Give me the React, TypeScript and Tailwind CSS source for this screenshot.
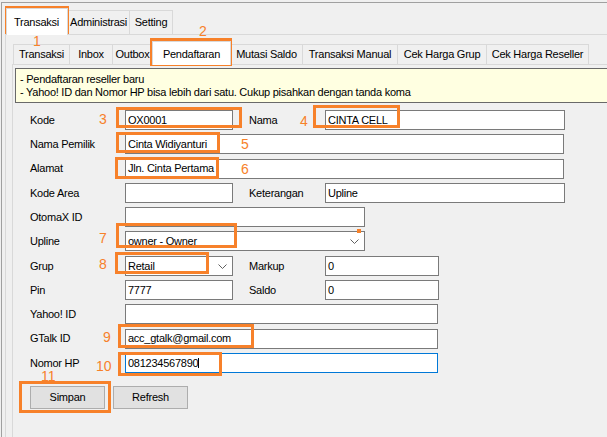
import React from "react";

type BoxProps = {
  w: string;
  value?: string;
  focused?: boolean;
  caret?: boolean;
};

function Box({ w, value = "", focused = false, caret = false }: BoxProps) {
  return (
    <div
      className={`${w} h-[20px] bg-white border ${focused ? "border-[#0078d7]" : "border-[#7a7a7a]"} pl-[2px] flex items-center text-black`}
    >
      <span>{value}</span>
      {caret ? <span className="w-[1px] h-[10px] bg-black" /> : null}
    </div>
  );
}

function Combo({ w, value }: { w: string; value: string }) {
  return (
    <div className={`${w} h-[20px] bg-white border border-[#7a7a7a] pl-[2px] pr-[5px] flex items-center justify-between text-black`}>
      <span>{value}</span>
      <svg width="9" height="5" viewBox="0 0 9 5" className="mt-[1px]">
        <polyline points="0.5,0.5 4.5,4.5 8.5,0.5" fill="none" stroke="#606060" strokeWidth="1" />
      </svg>
    </div>
  );
}

function Row({ label, children }: { label: string; children: React.ReactNode }) {
  return (
    <div className="flex items-center h-[20px]">
      <div className="w-[95px]">{label}</div>
      {children}
    </div>
  );
}

function Pair({ label }: { label: string }) {
  return <div className="w-[76px] ml-[16px]">{label}</div>;
}

function Mark({ className }: { className: string }) {
  return <div className={`absolute border-[3px] border-[#f7812a] ${className}`} />;
}

function Num({ className, children }: { className: string; children: React.ReactNode }) {
  return (
    <div className={`absolute text-[14px] leading-[10px] text-[#f7812a] font-['Liberation_Sans',Arial,sans-serif] tracking-normal ${className}`}>
      {children}
    </div>
  );
}

const innerTabs = [
  { label: "Transaksi", w: "w-[57px]" },
  { label: "Inbox", w: "w-[43px]" },
  { label: "Outbox", w: "w-[40px]" },
];

const innerTabsRight = [
  { label: "Mutasi Saldo", w: "w-[72px]" },
  { label: "Transaksi Manual", w: "w-[95px]" },
  { label: "Cek Harga Grup", w: "w-[89px]" },
  { label: "Cek Harga Reseller", w: "w-[102px]" },
];

export default function App() {
  return (
    <div className="relative w-[607px] h-[437px] overflow-hidden bg-[#f0f0f0] text-[11px] tracking-[-0.25px] text-black font-['Liberation_Sans',Arial,sans-serif]">
      <div className="ml-[1px] mt-[2px] h-[435px] border-l border-t border-[#a0a0a0]">
        <div className="ml-[3px] h-full">
          {/* top tabs */}
          <div className="flex items-end h-[31px] pl-[1px]">
            <div className="relative z-10 -mb-[1px] w-[62px] h-[27px] bg-white border border-b-0 border-[#d9d9d9] pl-[7px] pt-[5px]">
              Transaksi
            </div>
            <div className="w-[62px] h-[24px] border border-b-0 border-l-0 border-[#d9d9d9] flex items-center justify-center">
              Administrasi
            </div>
            <div className="w-[43px] h-[24px] border border-b-0 border-l-0 border-[#d9d9d9] flex items-center justify-center">
              Setting
            </div>
          </div>

          {/* top page */}
          <div className="h-full border-t border-l border-[#d9d9d9] pl-[6px]">
            {/* inner tabs */}
            <div className="flex items-end h-[29px] pl-[1px]">
              {innerTabs.map((t, i) => (
                <div
                  key={t.label}
                  className={`${t.w} h-[20px] border border-b-0 ${i === 0 ? "" : "border-l-0"} border-[#d9d9d9] flex items-center justify-center`}
                >
                  {t.label}
                </div>
              ))}
              <div className="relative z-10 -mb-[1px] -ml-[1px] w-[79px] h-[24px] bg-white border border-b-0 border-[#d9d9d9] flex items-start justify-center pt-[4px]">
                Pendaftaran
              </div>
              {innerTabsRight.map((t) => (
                <div
                  key={t.label}
                  className={`${t.w} h-[20px] border border-b-0 border-l-0 border-[#d9d9d9] flex items-center justify-center`}
                >
                  {t.label}
                </div>
              ))}
            </div>

            {/* inner page */}
            <div className="h-full border-t border-l border-[#d9d9d9] pl-[2px] pt-[3px]">
              <div className="w-[600px] h-[35px] bg-[#ffffe1] border border-[#696969] pl-[4px] pt-[4px] leading-[13px]">
                <div>- Pendaftaran reseller baru</div>
                <div>- Yahoo! ID dan Nomor HP bisa lebih dari satu. Cukup pisahkan dengan tanda koma</div>
              </div>

              <div className="pl-[15px] mt-[7px] flex flex-col gap-[4.3px]">
                <Row label="Kode">
                  <Box w="w-[108px]" value="OX0001" />
                  <Pair label="Nama" />
                  <Box w="w-[240px]" value="CINTA CELL" />
                </Row>
                <Row label="Nama Pemilik">
                  <Box w="w-[439px]" value="Cinta Widiyanturi" />
                </Row>
                <Row label="Alamat">
                  <Box w="w-[439px]" value="Jln. Cinta Pertama" />
                </Row>
                <Row label="Kode Area">
                  <Box w="w-[108px]" />
                  <Pair label="Keterangan" />
                  <Box w="w-[240px]" value="Upline" />
                </Row>
                <Row label="OtomaX ID">
                  <Box w="w-[240px]" />
                </Row>
                <Row label="Upline">
                  <Combo w="w-[240px]" value="owner - Owner" />
                </Row>
                <Row label="Grup">
                  <Combo w="w-[108px]" value="Retail" />
                  <Pair label="Markup" />
                  <Box w="w-[114px]" value="0" />
                </Row>
                <Row label="Pin">
                  <Box w="w-[108px]" value="7777" />
                  <Pair label="Saldo" />
                  <Box w="w-[114px]" value="0" />
                </Row>
                <Row label="Yahoo! ID">
                  <Box w="w-[313px]" />
                </Row>
                <Row label="GTalk ID">
                  <Box w="w-[313px]" value="acc_gtalk@gmail.com" />
                </Row>
                <Row label="Nomor HP">
                  <Box w="w-[313px]" value="081234567890" focused caret />
                </Row>
              </div>

              <div className="pl-[15px] mt-[13px] flex gap-[8px]">
                <button className="w-[75px] h-[23px] bg-[#e1e1e1] border border-[#adadad] text-[11px]">Simpan</button>
                <button className="w-[75px] h-[23px] bg-[#e1e1e1] border border-[#adadad] text-[11px]">Refresh</button>
              </div>
            </div>
          </div>
        </div>
      </div>

      {/* annotations */}
      <Mark className="left-[5px] top-[6px] w-[64px] h-[28px]" />
      <Mark className="left-[150px] top-[38px] w-[82px] h-[28px]" />
      <Mark className="left-[116px] top-[107px] w-[126px] h-[21px]" />
      <Mark className="left-[313px] top-[105px] w-[87px] h-[23px]" />
      <Mark className="left-[116px] top-[132px] w-[104px] h-[21px]" />
      <Mark className="left-[115px] top-[157px] w-[104px] h-[22px]" />
      <Mark className="left-[116px] top-[223px] w-[121px] h-[25px]" />
      <Mark className="left-[115px] top-[252px] w-[94px] h-[22px]" />
      <Mark className="left-[118px] top-[324px] w-[136px] h-[24px]" />
      <Mark className="left-[118px] top-[352px] w-[104px] h-[24px]" />
      <Mark className="left-[19px] top-[381px] w-[92px] h-[32px]" />
      <div className="absolute left-[357px] top-[229px] w-[4px] h-[4px] bg-[#f7812a]" />

      <Num className="left-[33px] top-[36px]">1</Num>
      <Num className="left-[199px] top-[26px]">2</Num>
      <Num className="left-[99px] top-[114px]">3</Num>
      <Num className="left-[300px] top-[116px]">4</Num>
      <Num className="left-[241px] top-[139px]">5</Num>
      <Num className="left-[241px] top-[164px]">6</Num>
      <Num className="left-[99px] top-[233px]">7</Num>
      <Num className="left-[99px] top-[259px]">8</Num>
      <Num className="left-[103px] top-[332px]">9</Num>
      <Num className="left-[96px] top-[361px]">10</Num>
      <Num className="left-[41px] top-[371px]">11</Num>
    </div>
  );
}
